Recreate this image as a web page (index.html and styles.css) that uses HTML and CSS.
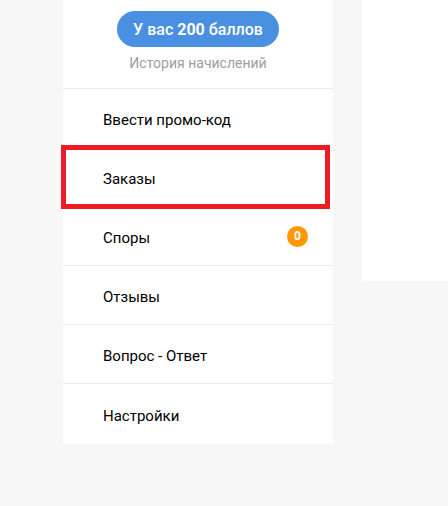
FILE: index.html
```html
<!DOCTYPE html>
<html lang="ru">
<head>
<meta charset="utf-8">
<title>Профиль</title>
<link rel="stylesheet" href="styles.css">
</head>
<body>
<div class="layout">
  <aside class="sidebar">
    <div class="bonus">
      <a class="bonus-pill" href="#">У вас <b>200</b> баллов</a>
      <a class="bonus-history" href="#">История начислений</a>
    </div>
    <nav class="menu">
      <a class="menu-item" href="#">Ввести промо-код</a>
      <a class="menu-item menu-item--marked" href="#">Заказы</a>
      <a class="menu-item" href="#">Споры <span class="badge">0</span></a>
      <a class="menu-item" href="#">Отзывы</a>
      <a class="menu-item" href="#">Вопрос - Ответ</a>
      <a class="menu-item menu-item--last" href="#">Настройки</a>
    </nav>
  </aside>
  <section class="content"></section>
</div>
</body>
</html>
```

FILE: styles.css
```css
* { box-sizing: border-box; }

body {
  margin: 0;
  background: #f7f7f7;
  font-family: Roboto, "Noto Sans", Arial, sans-serif;
}

.layout {
  display: flex;
  align-items: flex-start;
  gap: 29px;
  padding-left: 63px;
}

.sidebar {
  width: 270px;
  background: #ffffff;
}

.bonus {
  height: 89px;
  border-bottom: 1px solid #ebebeb;
  display: flex;
  flex-direction: column;
  align-items: center;
  padding-top: 11px;
}

.bonus-pill {
  display: flex;
  align-items: center;
  justify-content: center;
  height: 36px;
  padding: 0 16px;
  border-radius: 18px;
  background: #4a90e2;
  color: #ffffff;
  font-size: 16px;
  font-weight: 500;
  text-decoration: none;
  white-space: nowrap;
}

.bonus-pill b {
  font-weight: 700;
  margin: 0 4px;
}

.bonus-history {
  margin-top: 8px;
  font-size: 14px;
  color: #9e9e9e;
  text-decoration: none;
}

.menu {
  display: flex;
  flex-direction: column;
  padding-bottom: 1px;
}

.menu-item {
  position: relative;
  display: flex;
  align-items: center;
  justify-content: space-between;
  height: 59px;
  padding: 4px 25px 0 40px;
  border-bottom: 1px solid #ebebeb;
  color: #000000;
  font-size: 15px;
  font-weight: 400;
  text-decoration: none;
}

.menu-item--last {
  border-bottom: none;
}

.menu-item--marked::after {
  content: "";
  position: absolute;
  top: -3px;
  bottom: -3px;
  left: -2px;
  right: 3px;
  border: 5px solid #ed1c24;
}

.badge {
  display: flex;
  align-items: center;
  justify-content: center;
  width: 21px;
  height: 21px;
  margin-top: -4px;
  border-radius: 50%;
  background: #ff9800;
  color: #ffffff;
  font-size: 12px;
  font-weight: 700;
}

.content {
  width: 86px;
  height: 281px;
  background: #ffffff;
}
```
